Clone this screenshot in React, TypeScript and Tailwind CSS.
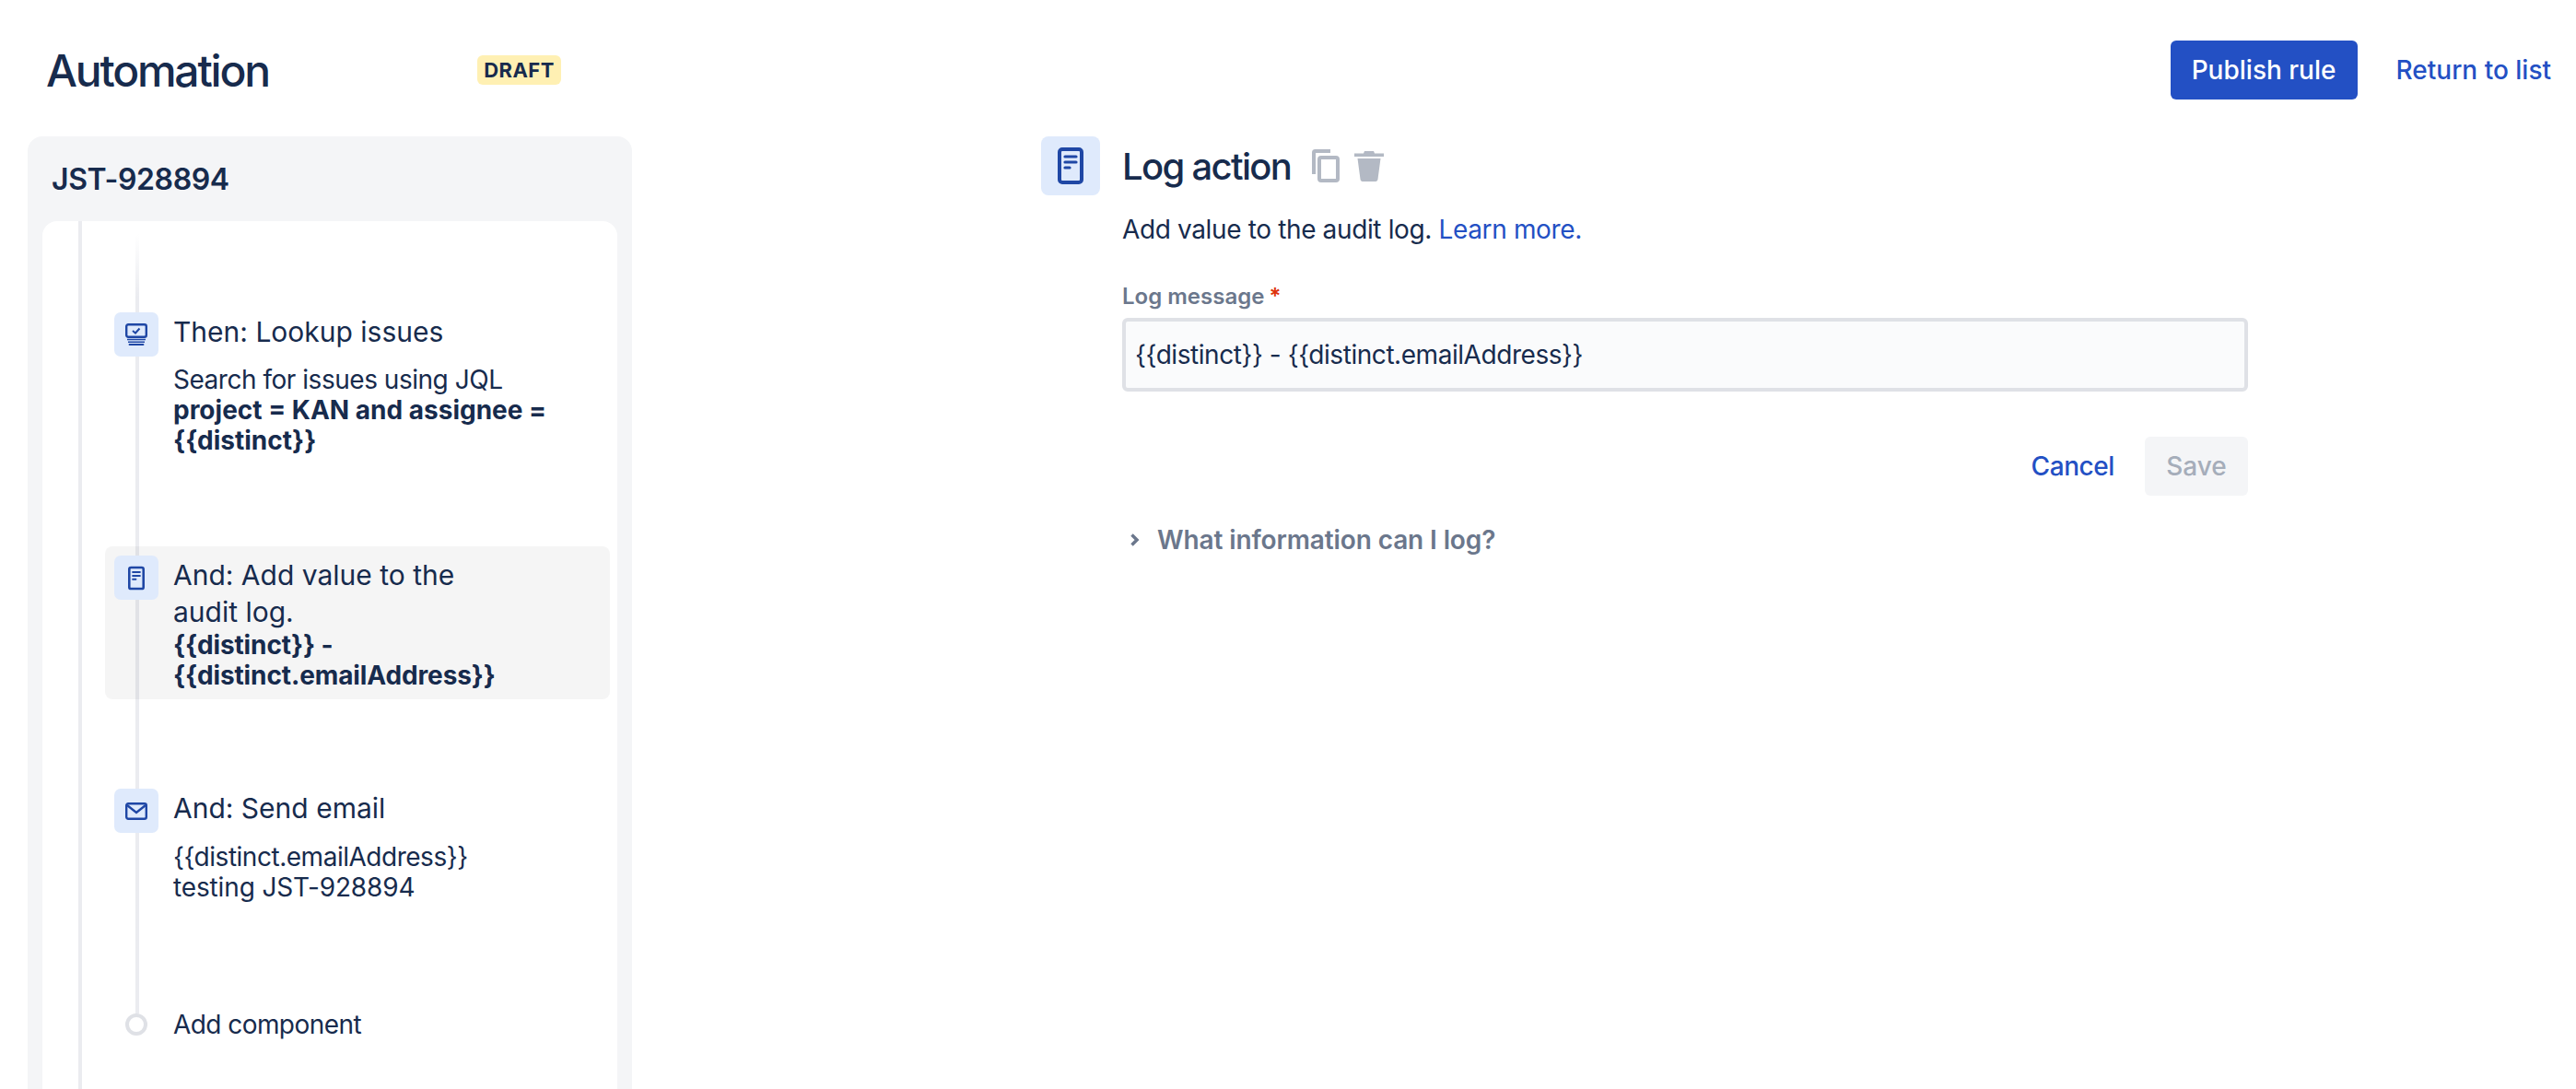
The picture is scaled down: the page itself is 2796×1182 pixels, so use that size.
import type { FC, ReactNode } from 'react';

const LogIcon: FC<{ className: string }> = ({ className }) => (
  <svg className={className} viewBox="0 0 28 40" fill="none">
    <rect x="2" y="2" width="24" height="36" rx="3" stroke="#1F47A5" strokeWidth="4" />
    <path d="M8 10h12M8 16h12" stroke="#1F47A5" strokeWidth="3.200" strokeLinecap="round" />
    <path d="M8 22h5" stroke="#1F47A5" strokeWidth="3.200" strokeLinecap="round" />
  </svg>
);

const LookupIcon = () => (
  <svg className="w-[24px] h-[24px]" viewBox="0 0 24 24" fill="none">
    <rect x="1.200" y="1.200" width="21.600" height="13.600" rx="2" stroke="#1F47A5" strokeWidth="2.400" />
    <path d="M8 8l3 2.500 4.500-5" stroke="#1F47A5" strokeWidth="2" />
    <path d="M2 17.500h20M3 20.300h18" stroke="#1F47A5" strokeWidth="1.600" />
    <path d="M4.500 23h15" stroke="#1F47A5" strokeWidth="1.800" strokeLinecap="round" />
  </svg>
);

const MailIcon = () => (
  <svg className="w-[24px] h-[19px]" viewBox="0 0 24 19" fill="none">
    <rect x="1.200" y="1.200" width="21.600" height="16.600" rx="2" stroke="#1F47A5" strokeWidth="2.400" />
    <path d="M2 3l10 8 10-8" stroke="#1F47A5" strokeWidth="2.400" />
  </svg>
);

const CopyIcon = () => (
  <svg className="w-[30px] h-[36px]" viewBox="0 0 30 36" fill="none">
    <path d="M2 27V3.500C2 2.600 2.600 2 3.500 2H20" stroke="#B3B9C4" strokeWidth="4" />
    <rect x="8" y="9" width="20" height="25" rx="2" stroke="#B3B9C4" strokeWidth="4" />
  </svg>
);

const TrashIcon = () => (
  <svg className="w-[32px] h-[33px]" viewBox="0 0 32 33" fill="#B3B9C4">
    <path d="M11 0h10l1 2.500h10V6H0V2.500h10z" />
    <path d="M3.500 8h25l-3 22.500c-.2 1.500-1 2.500-2.500 2.500H9c-1.500 0-2.300-1-2.500-2.500z" />
  </svg>
);

const Tile: FC<{ children: ReactNode }> = ({ children }) => (
  <div className="w-[48px] h-[48px] rounded-[7px] bg-[#DFEAFC] flex items-center justify-center shrink-0">
    {children}
  </div>
);

interface StepProps {
  icon: ReactNode;
  title: ReactNode;
  children: ReactNode;
  className: string;
}

const Step: FC<StepProps> = ({ icon, title, children, className }) => (
  <div className={`relative flex gap-[16px] pl-[10px] pr-[16px] pt-[10px] pb-[8px] rounded-[8px] ${className}`}>
    <Tile>{icon}</Tile>
    <div className="min-w-0 pt-[1px]">
      <div className="w-[400px] text-[30px] leading-[40px]">{title}</div>
      {children}
    </div>
  </div>
);

export default function App() {
  return (
    <div className="h-[1182px] overflow-hidden bg-white text-[#172B4D] font-['Inter',sans-serif] flex flex-col">
      <header className="flex items-center h-[64px] mt-[44px] mb-[40px] pl-[50px] pr-[27px]">
        <h1 className="w-[468px] text-[48px] leading-[64px] pt-[2px] font-medium tracking-[-0.046em] text-[#172B4D]">Automation</h1>
        <span className="h-[32px] w-[91px] rounded-[6px] bg-[#FFF0B3] flex items-center justify-center text-[22px] font-bold tracking-[0.02em]">
          DRAFT
        </span>
        <button className="ml-auto w-[203px] h-[64px] rounded-[6px] bg-[#2350C4] text-white text-[28px] font-medium">
          Publish rule
        </button>
        <a className="ml-[42px] text-[28px] font-medium text-[#2350C4]">Return to list</a>
      </header>

      <div className="flex flex-1 min-h-0">
        <aside className="ml-[30px] w-[656px] bg-[#F4F5F7] rounded-t-[16px] pl-[16px] pr-[16px] flex flex-col">
          <div className="h-[92px] pl-[10px] pt-[27px] text-[32px] leading-[40px] font-semibold tracking-[-0.012em]">JST-928894</div>
          <div className="relative flex-1 bg-white rounded-t-[16px] pt-[89px] pl-[68px] pr-[8px]">
            <div className="absolute left-[39px] top-0 bottom-0 w-[4px] bg-[#EBECF0]" />
            <div className="absolute left-[101px] top-[14px] h-[846px] w-[4px] bg-gradient-to-b from-transparent to-[#EBECF0] to-[8%]" />

            <Step icon={<LookupIcon />} title="Then: Lookup issues" className="">
              <div className="mt-[16px] text-[28px] leading-[33px]">
                <span className="tracking-[-0.017em]">Search for issues using JQL</span>
                <br />
                <b className="font-bold">
                  project = KAN and assignee =
                  <br />
                  {'{{distinct}}'}
                </b>
              </div>
            </Step>

            <Step
              icon={<LogIcon className="w-[18px] h-[27px]" />}
              title={
                <>
                  And: Add value to the
                  <br />
                  audit log.
                </>
              }
              className="mt-[90px] bg-black/[0.04] pb-[9px]"
            >
              <div className="text-[28px] leading-[33px] font-bold tracking-[-0.004em]">
                {'{{distinct}} -'}
                <br />
                {'{{distinct.emailAddress}}'}
              </div>
            </Step>

            <Step icon={<MailIcon />} title="And: Send email" className="mt-[87px]">
              <div className="mt-[17px] text-[28px] leading-[33px]">
                <span className="tracking-[-0.017em]">{'{{distinct.emailAddress}}'}</span>
                <br />
                <span className="tracking-[-0.005em]">testing JST-928894</span>
              </div>
            </Step>

            <div className="relative mt-[112px] flex items-center h-[24px] pl-[22px] gap-[28px] text-[28px] leading-[33px] tracking-[-0.02em]">
              <span className="w-[24px] h-[24px] rounded-full border-[4px] border-[#DFE1E6] bg-white shrink-0" />
              <span>Add component</span>
            </div>
          </div>
        </aside>

        <section className="ml-[444px] w-[1310px] flex gap-[24px]">
          <div className="w-[64px] h-[64px] rounded-[8px] bg-[#DFEAFC] flex items-center justify-center shrink-0">
            <LogIcon className="w-[28px] h-[40px]" />
          </div>
          <div className="w-[1222px]">
            <div className="flex items-center h-[64px]">
              <h2 className="text-[40px] leading-[48px] pt-[2px] font-medium tracking-[-0.042em]">Log action</h2>
              <div className="ml-[23px] flex items-center gap-[16px]">
                <CopyIcon />
                <TrashIcon />
              </div>
            </div>
            <p className="mt-[17px] text-[28px] leading-[40px] tracking-[-0.013em]">
              Add value to the audit log. <a className="text-[#2350C4]">Learn more.</a>
            </p>
            <label className="block mt-[37px] text-[24px] leading-[32px] font-semibold text-[#6B778C]">
              Log message<span className="ml-[5px] text-[#DE350B]">*</span>
            </label>
            <div className="mt-[7px] h-[80px] rounded-[6px] border-[4px] border-[#DFE1E6] bg-[#FAFBFC] flex items-center pl-[10px] text-[28px] tracking-[-0.016em]">
              {'{{distinct}} - {{distinct.emailAddress}}'}
            </div>
            <div className="mt-[49px] flex items-center justify-end">
              <a className="text-[28px] font-medium text-[#2350C4] tracking-[-0.015em]">Cancel</a>
              <button className="ml-[33px] w-[112px] h-[64px] rounded-[6px] bg-[#F4F5F7] text-[#A5ADBA] text-[28px] font-medium">
                Save
              </button>
            </div>
            <div className="mt-[28px] flex items-center text-[28px] leading-[40px] font-semibold text-[#6B778C] tracking-[-0.004em]">
              <svg className="ml-[8px] w-[12px] h-[18px]" viewBox="0 0 12 18" fill="none">
                <path d="M2.500 3.500L8 9l-5.500 5.500" stroke="#6B778C" strokeWidth="3.500" />
              </svg>
              <span className="ml-[18px]">What information can I log?</span>
            </div>
          </div>
        </section>
      </div>
    </div>
  );
}
